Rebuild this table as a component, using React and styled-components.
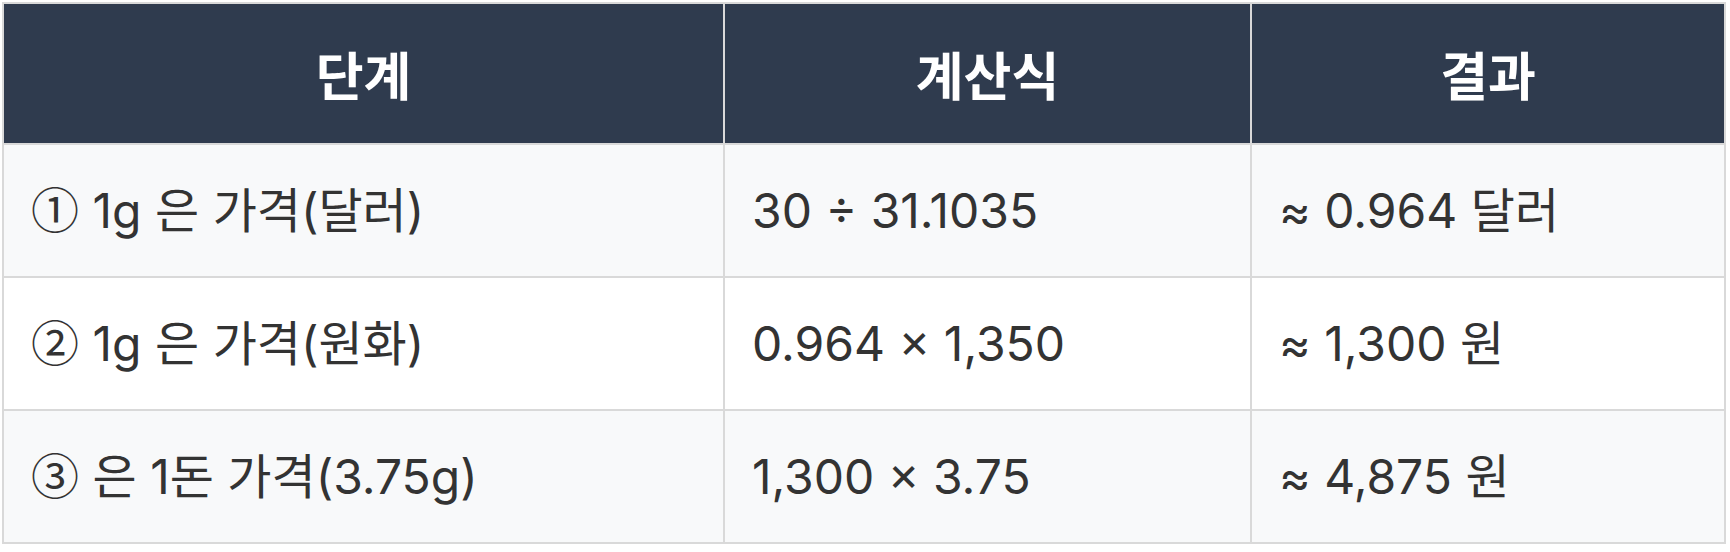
import React from "react";
import styled, { createGlobalStyle } from "styled-components";

const Global = createGlobalStyle`
  html, body { margin: 0; padding: 0; background: #ffffff; }
  body { font-family: "Inter", "Noto Sans CJK KR", sans-serif; }
`;

const Page = styled.div`
  padding: 2px 0 0 2px;
`;

const Table = styled.table`
  border-collapse: collapse;
  table-layout: fixed;
  width: 1722px;
  border: 2px solid #d0d0d0;
  font-family: "Inter", "Noto Sans CJK KR", sans-serif;
`;

const HeadCell = styled.th`
  background: #2f3b4e;
  color: #ffffff;
  font-weight: 700;
  font-size: 52px;
  line-height: 77px;
  padding: 31px 27px;
  text-align: center;
  border: 2px solid #d9d9d9;
  font-family: "Noto Sans CJK KR", sans-serif;
`;

const Row = styled.tr`
  background: ${(p) => (p.$alt ? "#ffffff" : "#f8f9fa")};
`;

const Cell = styled.td`
  color: #333333;
  font-size: 48px;
  line-height: 77px;
  height: 77px;
  padding: 27px 27px;
  text-align: left;
  border: 2px solid #d9d9d9;
  white-space: nowrap;
`;

const Num = styled.span`
  font-family: "Noto Sans CJK KR", sans-serif;
  line-height: 1;
`;

const rows = [
  ["①", "1g 은 가격(달러)", "30 ÷ 31.1035", "≈ 0.964 달러"],
  ["②", "1g 은 가격(원화)", "0.964 × 1,350", "≈ 1,300 원"],
  ["③", "은 1돈 가격(3.75g)", "1,300 × 3.75", "≈ 4,875 원"],
];

export default function App() {
  return (
    <>
      <Global />
      <Page>
        <Table>
          <colgroup>
            <col style={{ width: 721 }} />
            <col style={{ width: 527 }} />
            <col style={{ width: 474 }} />
          </colgroup>
          <thead>
            <tr>
              <HeadCell>단계</HeadCell>
              <HeadCell>계산식</HeadCell>
              <HeadCell>결과</HeadCell>
            </tr>
          </thead>
          <tbody>
            {rows.map((r, i) => (
              <Row key={i} $alt={i % 2 === 1}>
                <Cell>
                  <Num>{r[0]}</Num> {r[1]}
                </Cell>
                <Cell>{r[2]}</Cell>
                <Cell>{r[3]}</Cell>
              </Row>
            ))}
          </tbody>
        </Table>
      </Page>
    </>
  );
}
